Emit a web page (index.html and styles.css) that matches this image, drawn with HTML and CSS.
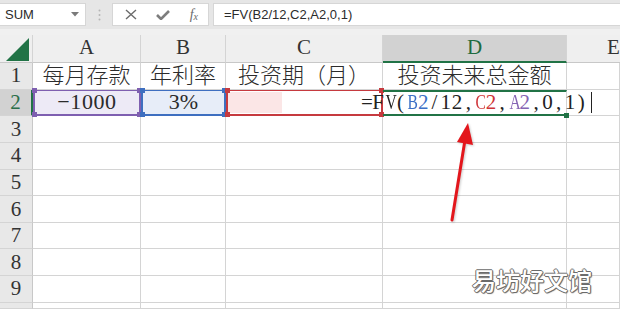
FILE: index.html
```html
<!DOCTYPE html>
<html lang="zh-CN">

<head>
    <meta charset="UTF-8">
    <meta name="viewport" content="width=device-width, initial-scale=1.0">
    <title>FV 函数</title>
    <link rel="stylesheet" href="styles.css">
</head>

<body>

    <div class="toolbar">
        <div class="name-box">
            <span>SUM</span>
            <svg class="caret" width="8" height="5" viewBox="0 0 8 5"><polygon points="0,0 8,0 4,4.5" fill="#7a7a7a"/></svg>
        </div>
        <div class="grip">
            <svg width="3" height="12" viewBox="0 0 3 12"><circle cx="1.5" cy="1.5" r="1" fill="#b5b5b5"/><circle cx="1.5" cy="6" r="1" fill="#b5b5b5"/><circle cx="1.5" cy="10.5" r="1" fill="#b5b5b5"/></svg>
        </div>
        <div class="fx-buttons">
            <svg width="12" height="11" viewBox="0 0 12 11"><path d="M1 1 L11 10 M11 1 L1 10" stroke="#6b6b6b" stroke-width="1.4" fill="none"/></svg>
            <svg width="14" height="10" viewBox="0 0 14 10"><path d="M1 5 L5 9 L13 1" stroke="#7d7d7d" stroke-width="2.6" fill="none"/></svg>
            <span class="fx">f<sub>x</sub></span>
        </div>
        <div class="formula-input">=FV(B2/12,C2,A2,0,1)</div>
    </div>

    <div class="strip"></div>

    <div class="sheet">
        <div class="row head">
            <div class="corner">
                <svg width="24" height="23" viewBox="0 0 24 23"><polygon points="0,23 23,0 23,23" fill="#217346"/></svg>
            </div>
            <div class="col-head">A</div>
            <div class="col-head">B</div>
            <div class="col-head">C</div>
            <div class="col-head active">D</div>
            <div class="col-head col-e">E</div>
        </div>

        <div class="row">
            <div class="rh">1</div>
            <div class="cell">每月存款</div>
            <div class="cell">年利率</div>
            <div class="cell">投资期（月）</div>
            <div class="cell">投资未来总金额</div>
            <div class="cell"></div>
        </div>

        <div class="row edit-row">
            <div class="rh active">2</div>
            <div class="cell sel sel-a">−1000</div>
            <div class="cell sel sel-b">3%</div>
            <div class="cell sel sel-c"><span class="pink"></span></div>
            <div class="cell sel-d"></div>
            <div class="cell"></div>
            <div class="edit"><span>=</span><span>F</span><span class="n">V</span><span>(</span><span class="ref-b n">B</span><span class="ref-b">2</span><span>/</span><span>1</span><span>2</span><span>,</span><span class="ref-c n">C</span><span class="ref-c">2</span><span>,</span><span class="ref-a n">A</span><span class="ref-a">2</span><span>,</span><span>0</span><span>,</span><span>1</span><span>)</span><i class="cursor"></i></div>
        </div>

        <div class="row"><div class="rh">3</div><div class="cell"></div><div class="cell"></div><div class="cell"></div><div class="cell"></div><div class="cell"></div></div>
        <div class="row"><div class="rh">4</div><div class="cell"></div><div class="cell"></div><div class="cell"></div><div class="cell"></div><div class="cell"></div></div>
        <div class="row"><div class="rh">5</div><div class="cell"></div><div class="cell"></div><div class="cell"></div><div class="cell"></div><div class="cell"></div></div>
        <div class="row"><div class="rh">6</div><div class="cell"></div><div class="cell"></div><div class="cell"></div><div class="cell"></div><div class="cell"></div></div>
        <div class="row"><div class="rh">7</div><div class="cell"></div><div class="cell"></div><div class="cell"></div><div class="cell"></div><div class="cell"></div></div>
        <div class="row"><div class="rh">8</div><div class="cell"></div><div class="cell"></div><div class="cell"></div><div class="cell"></div><div class="cell"></div></div>
        <div class="row"><div class="rh">9</div><div class="cell"></div><div class="cell"></div><div class="cell"></div><div class="cell"></div><div class="cell"></div></div>
        <div class="row last"><div class="rh"></div><div class="cell"></div><div class="cell"></div><div class="cell"></div><div class="cell"></div><div class="cell"></div></div>
    </div>

    <!-- annotation arrow pointing at the C2 reference -->
    <svg class="arrow" width="620" height="309" viewBox="0 0 620 309">
        <line x1="452" y1="220" x2="465" y2="140" stroke="#e3161c" stroke-width="3" stroke-linecap="round"/>
        <polygon points="468,123 473,145 457,142" fill="#e3161c"/>
    </svg>

    <div class="watermark">易坊好文馆</div>

</body>

</html>
```

FILE: styles.css
```css
* {
    box-sizing: border-box;
    margin: 0;
    padding: 0;
}

body {
    width: 620px;
    height: 309px;
    overflow: hidden;
    position: relative;
    background-color: #fff;
    font-family: "Liberation Serif", "Noto Sans CJK SC", serif;
    color: #2b2b2b;
}

/* formula bar */

.toolbar {
    display: flex;
    align-items: center;
    height: 29px;
    padding: 3px 0;
    background-color: #e6e6e6;
    font-family: "Liberation Sans", "Noto Sans", sans-serif;
    font-size: 13px;
    color: #2b2b2b;
}

.name-box {
    display: flex;
    align-items: center;
    justify-content: space-between;
    width: 86px;
    height: 23px;
    padding: 0 6px 0 5px;
    background-color: #fff;
    border: 1px solid #d6d6d6;
    border-left: none;
}

.grip {
    display: flex;
    justify-content: center;
    width: 26px;
}

.fx-buttons {
    display: flex;
    align-items: center;
    justify-content: space-between;
    width: 97px;
    height: 23px;
    padding: 0 10px 0 12px;
    background-color: #fff;
    border: 1px solid #d6d6d6;
}

.fx {
    font-family: "Liberation Serif", serif;
    font-style: italic;
    font-size: 14px;
    color: #6b6b6b;
}

.fx sub {
    font-size: 10px;
    vertical-align: -1px;
}

.formula-input {
    flex: 1;
    height: 23px;
    margin-left: 4px;
    padding: 3px 10px;
    background-color: #fff;
    border: 1px solid #d6d6d6;
    border-right: none;
}

.strip {
    height: 6px;
    background-color: #f0f0f0;
}

/* grid */

.row {
    display: grid;
    grid-template-columns: 33px 108px 85px 157px 184px 1fr;
    height: 26.65px;
    font-size: 22px;
    line-height: 1;
    font-family: "Liberation Serif", "Noto Sans CJK SC", serif;
}

.row.last {
    height: 6px;
}

.row.head {
    height: 28px;
    font-size: 21px;
    background-color: #efefef;
}

.corner {
    display: flex;
    align-items: flex-end;
    justify-content: flex-end;
    padding: 0 2px 1px 0;
    border-right: 1px solid #d4d4d4;
    border-bottom: 1px solid #c8c8c8;
}

.col-head {
    display: flex;
    align-items: flex-end;
    justify-content: center;
    padding-bottom: 4px;
    color: #333;
    border-right: 1px solid #d4d4d4;
    border-bottom: 1px solid #c8c8c8;
}

.col-head.active {
    background-color: #d2d2d2;
    color: #1e6b40;
    border-bottom: 2px solid #217346;
    padding-bottom: 3px;
}

.col-head.col-e {
    justify-content: flex-start;
    padding-left: 40px;
    border-right: none;
    overflow: hidden;
}

.rh {
    display: flex;
    align-items: center;
    justify-content: center;
    font-size: 21px;
    color: #333;
    background-color: #e8e8e8;
    border-right: 1px solid #c8c8c8;
    border-bottom: 1px solid #d4d4d4;
}

.rh.active {
    background-color: #d2d2d2;
    color: #2a6e48;
    border-right: 2px solid #217346;
}

.cell {
    display: flex;
    align-items: center;
    justify-content: center;
    border-right: 1px solid #d4d4d4;
    border-bottom: 1px solid #d4d4d4;
    white-space: nowrap;
    font-weight: 300;
    color: #2b2b2b;
}

/* cells referenced by the formula */

.edit-row {
    position: relative;
}

.sel {
    position: relative;
    border: 2px solid;
    border-top-width: 1px;
}

.sel::before,
.sel::after {
    content: "";
    position: absolute;
    left: -3px;
    right: -3px;
    height: 5px;
    background: linear-gradient(to right, var(--c) 5px, transparent 5px, transparent calc(100% - 5px), var(--c) calc(100% - 5px));
}

.sel::before {
    top: -3px;
}

.sel::after {
    bottom: -3px;
}

.sel-a {
    --c: #7e5fb0;
    border-color: #7e5fb0;
    background-color: #edeaf6;
    letter-spacing: 0.6px;
}

.sel-b {
    --c: #3e6fc0;
    border-color: #3e6fc0;
    background-color: #e7edf8;
}

.sel-c {
    --c: #c63a3f;
    border-color: #c63a3f;
    justify-content: flex-start;
    padding: 1px 0;
}

.pink {
    width: 54px;
    height: 100%;
    background-color: #fbe6e6;
}

.sel-d {
    position: relative;
    border-top: 2px solid #217346;
    border-bottom: 2px solid #217346;
}

.sel-d::after {
    content: "";
    position: absolute;
    right: -3px;
    bottom: -4px;
    width: 5px;
    height: 5px;
    background-color: #217346;
}

.edit {
    position: absolute;
    left: 361px;
    top: 0;
    height: 100%;
    display: flex;
    align-items: center;
    font-size: 21px;
    color: #222;
}

.edit span {
    display: inline-block;
    width: 11.3px;
    text-align: center;
}

.edit .n {
    transform: scaleX(0.74);
}

.edit .ref-b {
    color: #3b6fc6;
}

.edit .ref-c {
    color: #cf3338;
}

.edit .ref-a {
    color: #8665b4;
}

.cursor {
    display: inline-block;
    width: 1px;
    height: 21px;
    margin-left: 4px;
    background-color: #222;
}

/* overlays */

.arrow {
    position: absolute;
    left: 0;
    top: 0;
    filter: drop-shadow(1px 1px 1px rgba(0, 0, 0, 0.2));
}

.watermark {
    position: absolute;
    left: 472px;
    top: 262px;
    font-family: "Noto Sans CJK SC", sans-serif;
    font-size: 24px;
    font-weight: 500;
    color: #fff;
    text-shadow: 1px 0 0 #6b6b6b, -1px 0 0 #6b6b6b, 0 1px 0 #6b6b6b, 0 -1px 0 #6b6b6b, 1px 1px 1px #6b6b6b;
}
```
